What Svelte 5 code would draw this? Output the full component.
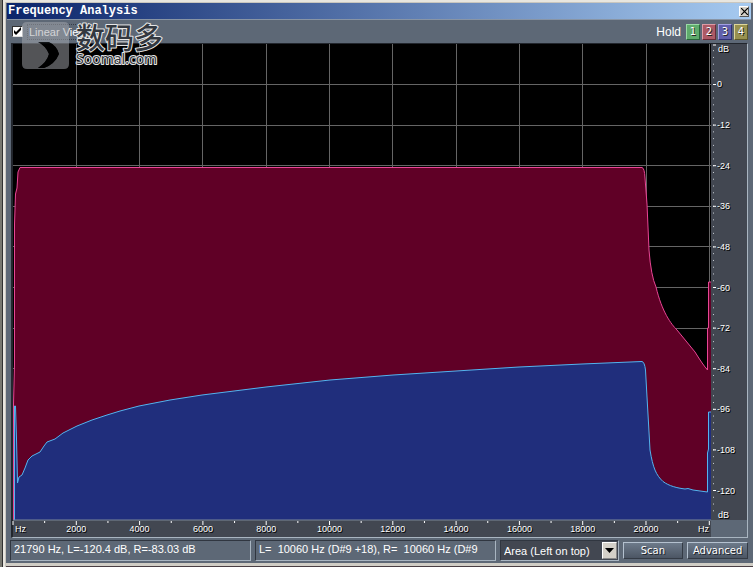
<script lang="ts">
  // Frequency Analysis window: spectrum of both channels with Hz / dB rulers,
  // the hold buttons on top and the readouts and controls underneath.
  const W = 698;
  const H = 476;

  const hz = [2000, 4000, 6000, 8000, 10000, 12000, 14000, 16000, 18000, 20000];
  const ticks = Array.from({ length: 23 }, (_, i) => i * 1000);
  const db = [0, -12, -24, -36, -48, -60, -72, -84, -96, -108, -120];
  const dbTicks = Array.from({ length: 69 }, (_, i) => 10 - i * 2);

  const px = (f: number) => (f * 633) / 20000;
  const py = (d: number) => 40.5 - (d * 406) / 120;
  const xPct = (f: number) => `${(px(f) / W) * 100}%`;
  const yPct = (d: number) => `${(py(d) / H) * 100}%`;

  const right =
    "M0.5 476V360L1.5 320V180L2.5 150L4 144L5 128L7 123.5H629Q631.5 124 632 134L634 160L636 206Q638 232 643 243C649 268 658 280 664 286L682 308Q690 321 694.5 326V284H695.5V238H698";
  const left =
    "M1.5 476V362H2.5L3.5 395L4.5 439L6 433L9 431L12 424L15 416L19 412L27 408L31 402L34 398L42 395L50 389L56 386L64 382L79 376L94 371L107 367L126 362L157 356L189 351L253 343L317 336L380 331L443 327L506 323L569 320L629 317.5Q631.5 318 632.5 326L634 353L635.5 379L637 406C640 424 643 431 650 437.5C656 442 664 444 672 445L675 444.5L680 446L694.5 448V409L695.5 405V368H698";

  const readout = "21790 Hz, L=-120.4 dB, R=-83.03 dB";
  const peaks = "L=  10060 Hz (D#9 +18), R=  10060 Hz (D#9";

  let linear = $state(true);
  let view = $state("area");
</script>

<main class="window">
  <header class="titlebar">
    <h1>Frequency Analysis</h1>
    <button class="close" aria-label="Close">
      <svg width="7" height="7" viewBox="0 0 7 7"><path d="M0 0L7 7M7 0L0 7" stroke="#000" stroke-width="1.2" /></svg>
    </button>
  </header>

  <div class="toolbar">
    <label class="linear">
      <input type="checkbox" bind:checked={linear} />
      <svg class="check" viewBox="0 0 11 11" aria-hidden="true">
        {#if linear}<path d="M2 4V7L4 9L9 4V1L4 6Z" fill="#000" />{/if}
      </svg>
      <span>Linear View</span>
    </label>
    <div class="hold">
      <span>Hold</span>
      <button class="h1">1</button>
      <button class="h2">2</button>
      <button class="h3">3</button>
      <button class="h4">4</button>
    </div>
  </div>

  <section class="frame">
    <svg class="plot" viewBox="0 0 {W} {H}" preserveAspectRatio="none" role="img" aria-label="Frequency spectrum">
      {#each hz as f}
        <line class="grid" x1={px(f)} x2={px(f)} y1="0" y2={H} />
      {/each}
      {#each db as d}
        <line class="grid" x1="0" x2={W} y1={py(d)} y2={py(d)} />
      {/each}
      <line class="grid" x1="696.5" x2="696.5" y1="0" y2={H} />
      <path d="{right}V476H0Z" fill="#600026" />
      <path d="{left}V476H1Z" fill="#202e7c" />
      <path class="trace" d={left} stroke="#53b4ee" />
      <path class="trace" d={right} stroke="#e84595" />
    </svg>
    <svg class="ruler-y">
      <line x1="2" x2="5" y1="1" y2="1" stroke="#fff" />
      {#each dbTicks as d}
        <line x1="2" x2="3" y1={yPct(d)} y2={yPct(d)} stroke="#ccd1d8" />
      {/each}
      <text x="7" y="8">dB</text>
      {#each db as d}
        <line x1="2" x2="5" y1={yPct(d)} y2={yPct(d)} stroke="#fff" />
        <text x="6" y={yPct(d)} dy="3">{d}</text>
      {/each}
      <text x="7" y="99%" dy="3">dB</text>
    </svg>
    <svg class="ruler-x">
      <line x1="0" x2="100%" y1="0" y2="0" stroke="#7b8798" />
      {#each ticks as f}
        <line x1={xPct(f)} x2={xPct(f)} y1="1" y2={f % 2000 === 0 ? 5 : 3} stroke="#fff" />
      {/each}
      <text x="2" y="12">Hz</text>
      {#each hz as f}
        <text x={xPct(f)} y="12" text-anchor="middle">{f}</text>
      {/each}
      <text x="99%" dx="5" y="12" text-anchor="end">Hz</text>
    </svg>
  </section>

  <footer class="status">
    <output class="readout">{readout}</output>
    <output class="readout">{peaks}</output>
    <div class="pick">
      <select aria-label="Display style" bind:value={view}>
        <option value="area">Area (Left on top)</option>
        <option value="area-right">Area (Right on top)</option>
        <option value="lines">Lines</option>
      </select>
      <span class="arrow"><svg width="9" height="5" viewBox="0 0 9 5"><path d="M0 0H9L4.5 5Z" /></svg></span>
    </div>
    <button class="action">Scan</button>
    <button class="action">Advanced</button>
  </footer>

  <svg class="mark" width="144" height="52" viewBox="0 0 144 52" role="img" aria-label="数码多 Soomal.com">
    <path
      fill="#a5a8ad"
      fill-opacity=".5"
      fill-rule="evenodd"
      d="M5 0H42Q47 0 47 5V42Q47 47 42 47H5Q0 47 0 42V5Q0 0 5 0ZM16 20H27Q35 24 37 32Q33 42 22 46H16Q25 40 27 32Q24 24 16 20Z"
    />
    <path d="M16 20H27Q35 24 37 32Q33 42 22 46H16Q25 40 27 32Q24 24 16 20Z" fill="#000" fill-opacity=".8" />
    <text class="cjk" x="54" y="27">数码多</text>
    <text class="domain" x="54" y="42">Soomal.com</text>
  </svg>
</main>

<style>
  :global(body) {
    margin: 0;
    background: #5d6876;
  }
  .window {
    position: relative;
    box-sizing: border-box;
    height: 100vh;
    min-height: 320px;
    display: flex;
    flex-direction: column;
    padding: 3px 2px 4px 7px;
    background: #5d6876;
    color: #fff;
    font-family: "Liberation Sans", Arial, sans-serif;
    font-size: 11px;
    box-shadow:
      inset 2px 0 #77776f,
      inset 3px 0 #303030,
      inset 5px 2px #e8e6df,
      inset 6px 3px #c9c6be,
      inset 0 -1px #493e43,
      inset 0 -4px #d0cdc5;
  }
  button {
    padding: 0;
    font-family: inherit;
  }
  .titlebar {
    display: flex;
    align-items: center;
    justify-content: space-between;
    height: 17px;
    padding: 0 2px 0 1px;
    background: linear-gradient(90deg, #0b246a, #a6caf0);
    border-bottom: 1px solid #8995a5;
    box-sizing: border-box;
  }
  h1 {
    margin: 0;
    font: bold 12px/15px "Liberation Mono", monospace;
  }
  .close {
    display: flex;
    align-items: center;
    justify-content: center;
    width: 10px;
    height: 11px;
    border: 1px solid;
    border-color: #fff #555 #555 #fff;
    background: #d4d0c8;
  }
  .toolbar {
    display: flex;
    align-items: center;
    justify-content: space-between;
    height: 23px;
    padding: 0 3px 0 5px;
  }
  .linear {
    position: relative;
    display: flex;
    align-items: center;
    gap: 4px;
  }
  .linear input {
    appearance: none;
    width: 11px;
    height: 11px;
    margin: 0;
    background: #fff;
    border: 1px solid;
    border-color: #333 #ddd #ddd #333;
  }
  .check {
    position: absolute;
    left: 0;
    width: 11px;
    height: 11px;
    pointer-events: none;
  }
  .linear span {
    padding: 0 1px;
    line-height: 14px;
    border: 1px dotted #363d47;
  }
  .hold {
    display: flex;
    align-items: center;
    gap: 2px;
    font-size: 12px;
  }
  .hold span {
    margin-right: 3px;
  }
  .hold button {
    width: 14px;
    height: 16px;
    border: 1px solid;
    color: #fff;
    font: 10px/13px "DejaVu Sans", sans-serif;
    text-shadow: 1px 1px #222;
  }
  .hold .h1 {
    background: #5fab6c;
    border-color: #9bdaa7 #28663a #28663a #9bdaa7;
  }
  .hold .h2 {
    background: #ad5a66;
    border-color: #dd9ba5 #682b38 #682b38 #dd9ba5;
  }
  .hold .h3 {
    background: #605fab;
    border-color: #a19fe0 #303075 #303075 #a19fe0;
  }
  .hold .h4 {
    background: #98914f;
    border-color: #ded69a #5e5929 #5e5929 #ded69a;
  }
  .frame {
    flex: 1;
    min-height: 0;
    display: grid;
    grid-template: minmax(0, 1fr) 17px / minmax(0, 1fr) 36px;
    margin: 0 3px 0 4px;
    border: 1px solid;
    border-color: #22262d #a9b5c1 #a9b5c1 #22262d;
    border-left-width: 2px;
  }
  .plot {
    display: block;
    width: 100%;
    height: 100%;
    background: #000;
  }
  .ruler-y,
  .ruler-x {
    display: block;
    width: 100%;
    height: 100%;
    background: #424751;
    font-size: 9px;
  }
  .ruler-x {
    overflow: visible;
  }
  text {
    fill: #fff;
  }
  .ruler-y text,
  .ruler-x text {
    text-shadow: 1px 1px #000;
  }
  .grid {
    stroke: #656565;
    vector-effect: non-scaling-stroke;
    shape-rendering: crispEdges;
  }
  .trace {
    fill: none;
    stroke-width: 1;
    vector-effect: non-scaling-stroke;
  }
  .status {
    display: grid;
    grid-template-columns: 242fr 242fr 119fr 61fr 61fr;
    gap: 4px;
    height: 21px;
    padding: 2px 3px 2px 3px;
  }
  .readout {
    overflow: hidden;
    padding-left: 3px;
    border: 1px solid;
    border-color: #303640 #a9b5c1 #a9b5c1 #303640;
    line-height: 17px;
    white-space: pre;
  }
  .pick {
    position: relative;
    display: flex;
    border: 1px solid;
    border-color: #303640 #a9b5c1 #a9b5c1 #303640;
    background: #424751;
  }
  select {
    appearance: none;
    width: 100%;
    padding: 0 18px 0 3px;
    border: 0;
    background: none;
    color: #fff;
    font: 11px/18px "Liberation Sans", Arial, sans-serif;
  }
  .arrow {
    position: absolute;
    top: 1px;
    right: 1px;
    bottom: 1px;
    width: 13px;
    display: grid;
    place-items: center;
    border: 1px solid;
    border-color: #fff #888 #888 #fff;
    background: #d4d0c8;
    pointer-events: none;
  }
  .action {
    height: 17px;
    margin-top: 2px;
    border: 1px solid;
    border-color: #b4c1cf #343b45 #343b45 #b4c1cf;
    background: linear-gradient(#6d7a8a, #4c5664);
    color: #fff;
    font: 10px/14px "DejaVu Sans", sans-serif;
    text-shadow: 1px 1px #20242b;
  }
  .mark {
    position: absolute;
    top: 22px;
    left: 22px;
    overflow: visible;
    pointer-events: none;
  }
  .mark text {
    fill: #333840;
    stroke: #e6e6e6;
    stroke-width: 2px;
    stroke-linejoin: round;
    paint-order: stroke;
  }
  .cjk {
    font: 500 29px "Noto Sans CJK SC", sans-serif;
  }
  .domain {
    font: 14px "Noto Sans", sans-serif;
  }
</style>
